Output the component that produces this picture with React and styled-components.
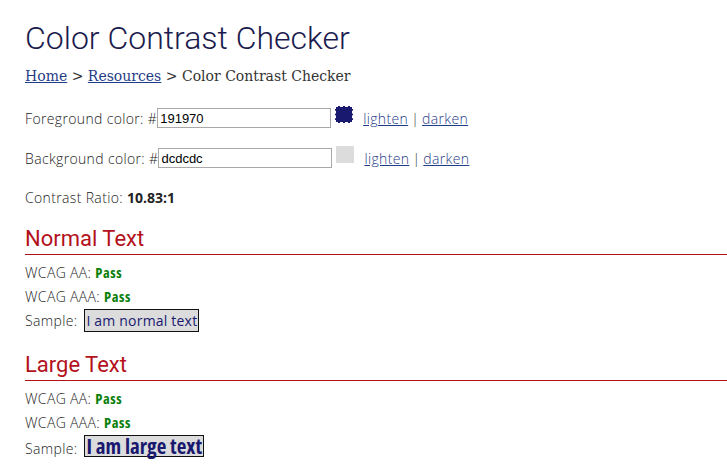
import React from 'react';
import styled, { createGlobalStyle } from 'styled-components';

const GlobalStyle = createGlobalStyle`
  body {
    margin: 0;
    background: #fff;
    font-family: "Open Sans", Lato, sans-serif;
    font-weight: 300;
    font-size: 14px;
    letter-spacing: 0.35px;
    color: #222;
  }
`;

const Page = styled.div`
    padding: 18px 0 0 25px;
    overflow: hidden;
`;

const Title = styled.h1`
    margin: 0;
    font-family: Roboto, "Open Sans", sans-serif;
    font-weight: 300;
    font-size: 32px;
    line-height: 40px;
    letter-spacing: 0;
    color: #1b1b4d;
`;

const Crumbs = styled.div`
    margin-top: 10px;
    font-family: "DejaVu Serif", "Liberation Serif", serif;
    font-size: 14px;
    line-height: 16px;
    letter-spacing: 0;
    color: #333;
`;

const CrumbLink = styled.a`
    color: #1f3c88;
    text-decoration: underline;
`;

const ColorRow = styled.div`
    display: flex;
    align-items: center;
    height: 20px;
    margin-top: ${(p) => (p.$first ? '24px' : '20px')};
`;

const Hash = styled.span`
    white-space: pre;
`;

const ColorInput = styled.input`
    box-sizing: border-box;
    width: 174px;
    height: 20px;
    margin: 0;
    padding: 1px 2px;
    border: 1px solid #a9a9a9;
    font-family: "Liberation Sans", Arial, sans-serif;
    font-size: 13px;
    letter-spacing: 0;
    color: #000;
`;

const Swatch = styled.span`
    align-self: flex-start;
    box-sizing: border-box;
    width: 18px;
    height: 17px;
    margin: -2px 10px 0 4px;
    background: ${(p) => p.$color};
    border: 1px ${(p) => (p.$jagged ? 'dashed #fff' : 'solid ' + p.$color)};
`;

const ToolLink = styled.a`
    color: #1f3c88;
    text-decoration: underline;
`;

const Sep = styled.span`
    margin: 0 3px;
    color: #333;
`;

const Ratio = styled.div`
    margin-top: 20px;
    line-height: 19px;
`;

const Strong = styled.b`
    font-weight: 700;
    letter-spacing: 0;
    color: #222;
`;

const Section = styled.h2`
    margin: 18px 0 0 0;
    padding-bottom: 1px;
    font-family: Roboto, "Open Sans", sans-serif;
    font-weight: 400;
    font-size: 22px;
    line-height: 28px;
    letter-spacing: 0;
    color: #b3111c;
    border-bottom: 1px solid #b3111c;
`;

const Line = styled.div`
    display: flex;
    align-items: baseline;
    height: 24px;
    line-height: 24px;
    white-space: pre;
    margin-top: ${(p) => (p.$first ? '6px' : '0')};
`;

const Pass = styled.span`
    font-family: "Open Sans", sans-serif;
    font-stretch: 85%;
    font-weight: 700;
    font-size: 14.5px;
    letter-spacing: 0.6px;
    color: #0a800a;
`;

const Sample = styled.span`
    box-sizing: border-box;
    margin-left: 7px;
    padding: 0 1px;
    background: #dcdcdc;
    color: #191970;
    border: 1px solid #111;
    font-family: "Open Sans", sans-serif;
    font-stretch: ${(p) => (p.$large ? '79%' : '100%')};
    font-size: ${(p) => (p.$large ? '21px' : '14px')};
    font-weight: ${(p) => (p.$large ? 700 : 400)};
    letter-spacing: ${(p) => (p.$large ? '0' : '0.2px')};
    line-height: 20px;
    height: ${(p) => (p.$large ? '22px' : '23px')};
    padding-top: ${(p) => (p.$large ? '0' : '1px')};
`;

const ColorLine = ({ label, value, color, jagged, first }) => (
    <ColorRow $first={first}>
        <Hash>{label} #</Hash>
        <ColorInput defaultValue={value} />
        <Swatch $color={color} $jagged={jagged} />
        <ToolLink href="#">lighten</ToolLink>
        <Sep>|</Sep>
        <ToolLink href="#">darken</ToolLink>
    </ColorRow>
);

const Results = ({ title, large }) => (
    <>
        <Section>{title}</Section>
        <Line $first>WCAG AA: <Pass>Pass</Pass></Line>
        <Line>WCAG AAA: <Pass>Pass</Pass></Line>
        <Line>Sample:<Sample $large={large}>{large ? 'I am large text' : 'I am normal text'}</Sample></Line>
    </>
);

const App = () => (
    <Page>
        <GlobalStyle />
        <Title>Color Contrast Checker</Title>
        <Crumbs>
            <CrumbLink href="#">Home</CrumbLink> &gt; <CrumbLink href="#">Resources</CrumbLink> &gt; Color Contrast Checker
        </Crumbs>
        <ColorLine first label="Foreground color:" value="191970" color="#191970" jagged />
        <ColorLine label="Background color:" value="dcdcdc" color="#dcdcdc" />
        <Ratio>Contrast Ratio: <Strong>10.83:1</Strong></Ratio>
        <Results title="Normal Text" />
        <Results title="Large Text" large />
    </Page>
);

export default App;
